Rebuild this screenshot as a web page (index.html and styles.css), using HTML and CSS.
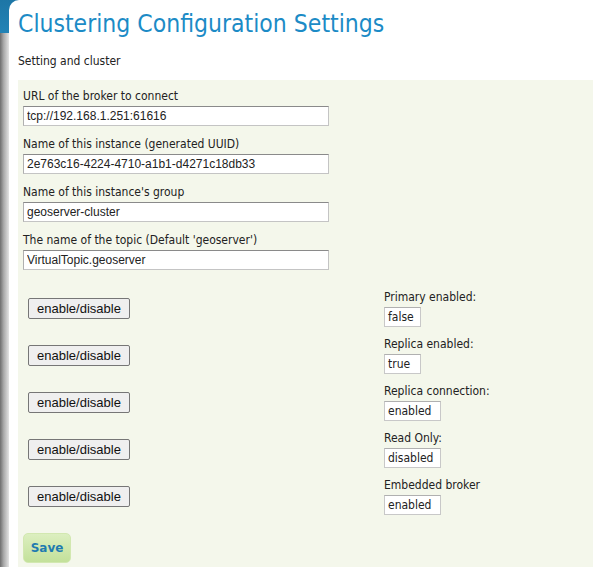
FILE: index.html
```html
<!DOCTYPE html>
<html>
<head>
<meta charset="utf-8">
<link rel="stylesheet" href="styles.css">
</head>
<body>
<div class="page">
  <h1 class="title">Clustering Configuration Settings</h1>
  <p class="subtitle">Setting and cluster</p>
  <div class="form">
    <div class="field">
      <label class="lbl">URL of the broker to connect</label>
      <input class="txt" type="text" value="tcp://192.168.1.251:61616">
    </div>
    <div class="field">
      <label class="lbl">Name of this instance (generated UUID)</label>
      <input class="txt" type="text" value="2e763c16-4224-4710-a1b1-d4271c18db33">
    </div>
    <div class="field">
      <label class="lbl">Name of this instance's group</label>
      <input class="txt" type="text" value="geoserver-cluster">
    </div>
    <div class="field">
      <label class="lbl">The name of the topic (Default 'geoserver')</label>
      <input class="txt" type="text" value="VirtualTopic.geoserver">
    </div>

    <div class="toggles">
      <div class="row">
        <button class="btn">enable/disable</button>
        <div class="stat">
          <div class="lbl">Primary enabled:</div>
          <div class="val short">false</div>
        </div>
      </div>
      <div class="row">
        <button class="btn">enable/disable</button>
        <div class="stat">
          <div class="lbl">Replica enabled:</div>
          <div class="val short">true</div>
        </div>
      </div>
      <div class="row">
        <button class="btn">enable/disable</button>
        <div class="stat">
          <div class="lbl">Replica connection:</div>
          <div class="val">enabled</div>
        </div>
      </div>
      <div class="row">
        <button class="btn">enable/disable</button>
        <div class="stat">
          <div class="lbl">Read Only:</div>
          <div class="val">disabled</div>
        </div>
      </div>
      <div class="row">
        <button class="btn">enable/disable</button>
        <div class="stat">
          <div class="lbl">Embedded broker</div>
          <div class="val">enabled</div>
        </div>
      </div>
    </div>

    <button class="save">Save</button>
  </div>
</div>
</body>
</html>
```

FILE: styles.css
```css
html, body {
  margin: 0;
  padding: 0;
  height: 100%;
}
body {
  background:
    linear-gradient(#1d76a6, #2283b6) 0 0 / 24px 33px no-repeat,
    linear-gradient(to right, #6e6e6e, #a8a8a8 40%, #e4e4e4) 0 0 / 9px 100% no-repeat,
    #ffffff;
  font-family: "DejaVu Sans Condensed", "DejaVu Sans", sans-serif;
  color: #222;
  overflow: hidden;
}
.page {
  margin-left: 9px;
  height: 100%;
  box-sizing: border-box;
  background: #ffffff;
  border-top-left-radius: 10px;
  padding-left: 9px;
  display: flex;
  flex-direction: column;
}
.title {
  margin: 0;
  padding-top: 8px;
  font-weight: normal;
  font-size: 24.5px;
  line-height: 32px;
  color: #1c8bc6;
}
.subtitle {
  margin: 0;
  padding-top: 14px;
  font-size: 12px;
  line-height: 15px;
  color: #222;
}
.form {
  flex: 1;
  margin-top: 11px;
  background: #f4f7eb;
  padding: 9px 5px 0;
}
.field {
  display: flex;
  flex-direction: column;
  margin-bottom: 11px;
}
.lbl {
  font-size: 12px;
  line-height: 15px;
  color: #222;
}
.field .lbl {
  margin-bottom: 2px;
}
.txt {
  width: 306px;
  height: 20px;
  box-sizing: border-box;
  margin: 0;
  padding: 0 3px;
  border: 1px solid #c4c4c4;
  border-top-color: #8a8a8a;
  border-left-color: #b0b0b0;
  font-family: "Liberation Sans", Arial, sans-serif;
  font-size: 12px;
  color: #222;
  background: #fff;
}
.toggles {
  margin-top: 20px;
  display: flex;
  flex-direction: column;
  gap: 10px;
}
.row {
  display: grid;
  grid-template-columns: 361px auto;
  align-items: center;
}
.btn {
  justify-self: start;
  margin-left: 5px;
  width: 102px;
  height: 21px;
  padding: 0;
  border: 1px solid #767676;
  border-radius: 2px;
  background: #efefef;
  font-family: "Liberation Sans", Arial, sans-serif;
  font-size: 13px;
  color: #111;
}
.stat .lbl {
  margin-bottom: 2px;
}
.val {
  width: 57px;
  height: 20px;
  box-sizing: border-box;
  border: 1px solid #c8c8c8;
  border-top-color: #b0b0b0;
  background: #fff;
  font-size: 12px;
  line-height: 18px;
  padding-left: 3px;
  color: #222;
}
.val.short {
  width: 37px;
}
.save {
  margin-top: 18px;
  width: 48px;
  height: 30px;
  padding: 0;
  border: 1px solid #d2e8b0;
  border-radius: 5px;
  background: linear-gradient(#dcefc0, #c3e19a);
  font-family: "DejaVu Sans", Verdana, sans-serif;
  font-weight: bold;
  font-size: 12px;
  color: #1f7bb0;
}
```
